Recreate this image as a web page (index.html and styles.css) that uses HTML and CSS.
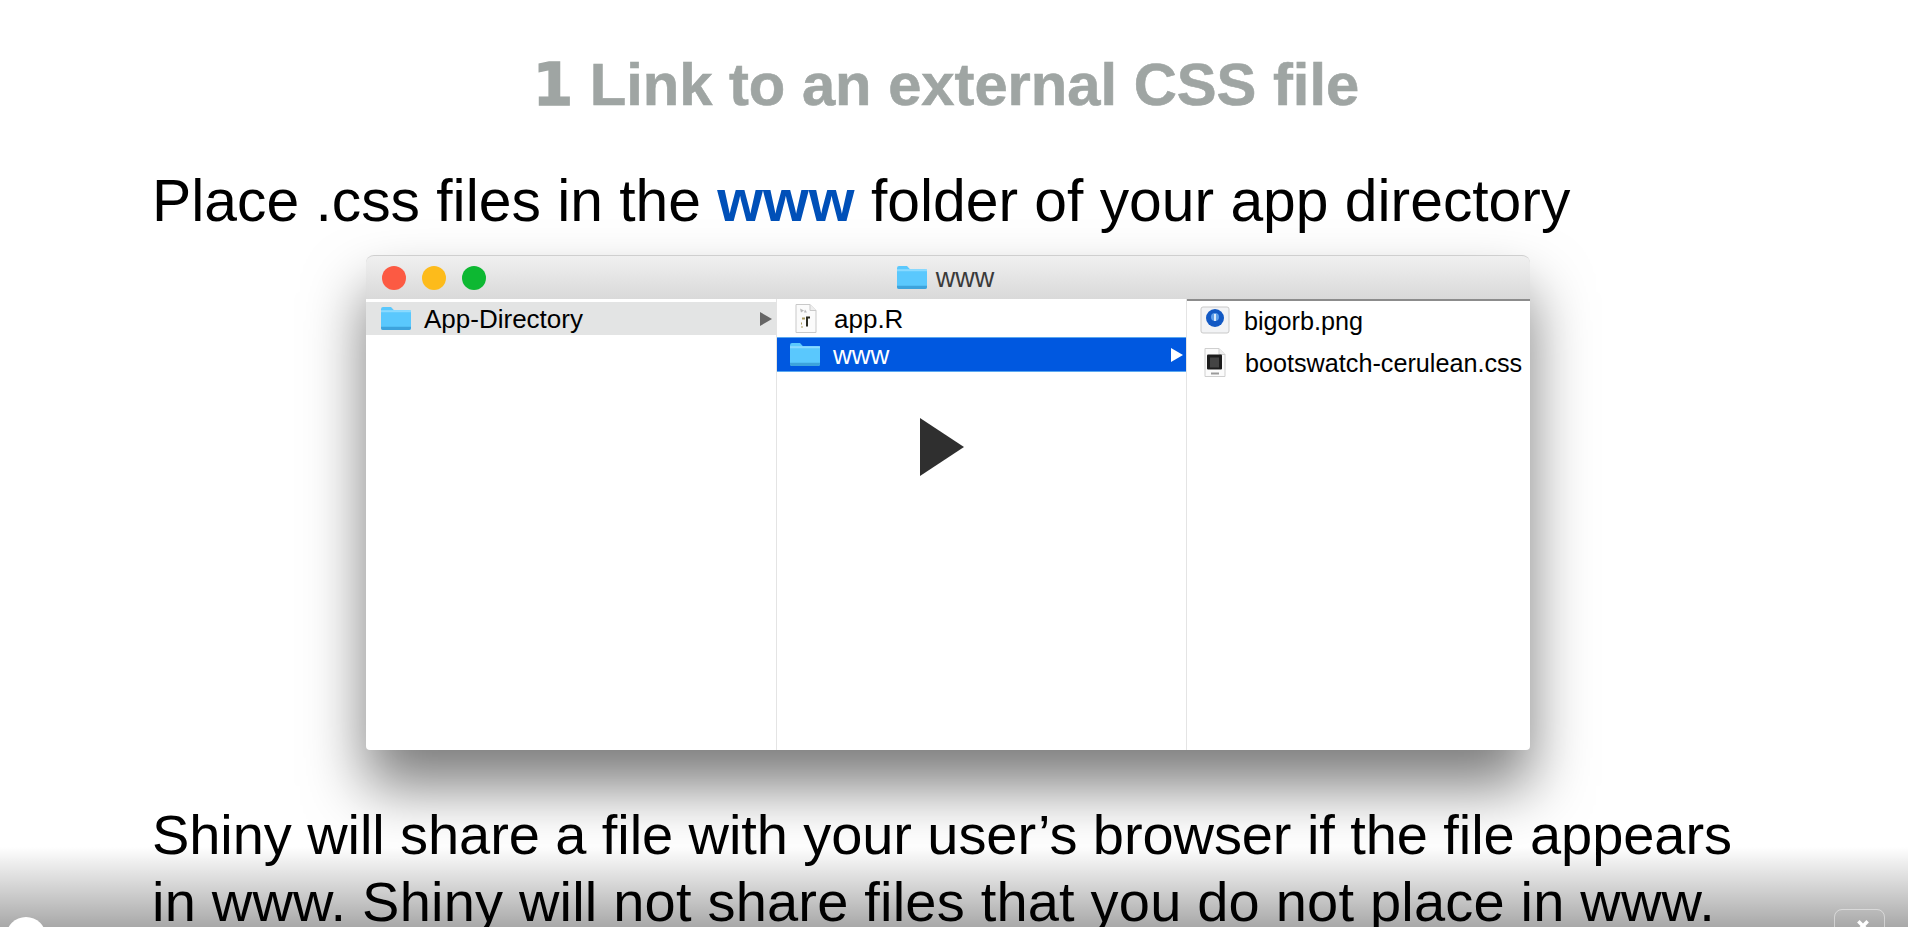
FILE: index.html
```html
<!DOCTYPE html>
<html lang="en">
<head>
  <meta charset="UTF-8">
  <title>Link to an external CSS file</title>
  <link rel="stylesheet" href="styles.css">
</head>
<body>
  <div class="slide">
    <h1 class="title"><span class="num">1</span> Link to an external CSS file</h1>
    <p class="lead">Place .css files in the <b class="hl">www</b> folder of your app directory</p>

    <div class="finder">
      <div class="titlebar">
        <div class="lights">
          <span class="light red"></span>
          <span class="light yellow"></span>
          <span class="light green"></span>
        </div>
        <div class="wintitle">
          <svg class="folder" viewBox="0 0 32 24" preserveAspectRatio="none"><use href="#folder"></use></svg>
          <span class="name">www</span>
        </div>
      </div>
      <div class="cols">
        <div class="col col1">
          <div class="row row-grey">
            <svg class="folder" viewBox="0 0 32 24" preserveAspectRatio="none"><use href="#folder"></use></svg>
            <span class="name">App-Directory</span>
            <span class="arrow"></span>
          </div>
        </div>
        <div class="col col2">
          <div class="row row-file">
            <svg class="fileicon" viewBox="0 0 24 30">
              <path d="M2 1h14l6 6v22H2z" fill="#fbfbfb" stroke="#c9c9c9"/>
              <path d="M16 1v6h6" fill="#eee" stroke="#c9c9c9"/>
              <path d="M6 5l4 2-3 2zM11 6l2 3-3 0z" fill="#b9b9b9"/>
              <path d="M12 13h4v2h-2v8h-2z" fill="#2b2b20"/>
              <path d="M8 14h3v2H8zM7 23h2v1H7zM7 19h1v2H7z" fill="#a89a60"/>
            </svg>
            <span class="name">app.R</span>
          </div>
          <div class="row row-blue">
            <svg class="folder" viewBox="0 0 32 24" preserveAspectRatio="none"><use href="#folder"></use></svg>
            <span class="name">www</span>
            <span class="arrow arrow-white"></span>
          </div>
        </div>
        <div class="col col3">
          <div class="item item-png">
            <svg class="fileicon wide" viewBox="0 0 30 28">
              <rect x="1" y="1" width="28" height="26" rx="2" fill="#f2f3f5" stroke="#c9c9c9"/>
              <circle cx="15" cy="12" r="9" fill="#1259c4"/>
              <circle cx="15" cy="11" r="4" fill="#5f9fe8"/>
              <path d="M14 8h2v7h-2z" fill="#dce9f8"/>
            </svg>
            <span class="name">bigorb.png</span>
          </div>
          <div class="item">
            <svg class="fileicon" viewBox="0 0 24 30">
              <path d="M2 1h14l6 6v22H2z" fill="#fbfbfb" stroke="#cfcfcf"/>
              <path d="M16 1v6h6" fill="#eee" stroke="#cfcfcf"/>
              <rect x="4" y="7" width="15" height="15" rx="1" fill="#1c1c1c"/>
              <rect x="7" y="10" width="9" height="10" fill="#444"/>
              <path d="M8 25h8v2H8z" fill="#9a9a9a"/>
            </svg>
            <span class="name">bootswatch-cerulean.css</span>
          </div>
        </div>
      </div>
    </div>

    <p class="note">
      <span class="line">Shiny will share a file with your user’s browser if the file appears</span>
      <span class="line line2">in www. Shiny will not share files that you do not place in www.</span>
    </p>
  </div>

  <!-- video player bits on top of the slide -->
  <div class="shade"></div>
  <svg class="play" viewBox="0 0 44 58"><path d="M0 0L44 29L0 58z"></path></svg>
  <div class="knob"></div>
  <div class="corner-btn">
    <svg viewBox="0 0 12 12"><path d="M2 2l8 8M10 2l-8 8"></path></svg>
  </div>

  <svg class="defs" aria-hidden="true">
    <symbol id="folder" viewBox="0 0 32 24" preserveAspectRatio="none">
      <path d="M1 3a2 2 0 0 1 2-2h8l3 3h15a2 2 0 0 1 2 2v15a2 2 0 0 1-2 2H3a2 2 0 0 1-2-2z" fill="#5ac8fd"/>
      <path d="M1 21a2 2 0 0 0 2 2h26a2 2 0 0 0 2-2v-1H1z" fill="#3da3dc"/>
      <path d="M1 4h30v2H1z" fill="#8adaff"/>
    </symbol>
  </svg>
</body>
</html>
```

FILE: styles.css
```css
html, body {
  margin: 0;
  height: 100%;
  overflow: hidden;
  background: #fff;
}
body {
  font-family: 'Liberation Sans', Arial, sans-serif;
  color: #000;
  position: relative;
}
.slide {
  height: 927px;
  overflow: hidden;
  padding: 46px 0 0 152px;
  box-sizing: border-box;
}
.title {
  margin: 0 0 0 -168px;
  text-align: center;
  font-size: 59.7px;
  line-height: 78px;
  font-weight: bold;
  color: #9fa5a3;
  -webkit-text-stroke: 0.6px #9fa5a3;
}
.title .num {
  font-size: 58px;
  font-family: 'DejaVu Sans', sans-serif;
  -webkit-text-stroke: 1.5px #9fa5a3;
}
.lead {
  margin: 42px 0 0;
  font-size: 58.8px;
  line-height: 70px;
  white-space: nowrap;
}
.hl {
  color: #0050b8;
}

.finder {
  width: 1164px;
  height: 495px;
  margin: 19px 0 0 214px;
  border-radius: 8px 8px 4px 4px;
  background: #fff;
  box-shadow: 0 36px 60px rgba(0, 0, 0, 0.52);
  display: flex;
  flex-direction: column;
}
.titlebar {
  height: 44px;
  flex: none;
  border-radius: 8px 8px 0 0;
  border-top: 1px solid #cfcfcf;
  box-sizing: border-box;
  background: linear-gradient(#f0f0f0, #d9d9d9);
  position: relative;
  display: flex;
  align-items: center;
  justify-content: center;
}
.lights {
  position: absolute;
  left: 16px;
  top: 10px;
  display: flex;
  gap: 16px;
}
.light {
  width: 24px;
  height: 24px;
  border-radius: 50%;
}
.red { background: #fc5a43; }
.yellow { background: #fdbb1b; }
.green { background: #0db832; }
.wintitle {
  display: flex;
  align-items: center;
  gap: 8px;
  font-size: 27px;
  color: #3a3a3a;
  margin-left: -6px;
}
.cols {
  flex: 1;
  display: flex;
  min-height: 0;
}
.col {
  box-sizing: border-box;
  font-size: 26px;
}
.col1 {
  width: 411px;
  border-right: 1px solid #e4e4e4;
}
.col2 {
  width: 410px;
  border-right: 1px solid #e4e4e4;
}
.col3 {
  flex: 1;
  font-size: 25.2px;
  border-top: 2px solid #8c8c8c;
  padding: 1px 0 0 13px;
}
.row {
  display: flex;
  align-items: center;
  position: relative;
}
.row-grey {
  height: 33px;
  background: #e3e4e4;
  margin-top: 3px;
  padding-left: 14px;
}
.row-file {
  height: 38px;
  padding-left: 17px;
}
.row-blue {
  height: 35px;
  background: #0058e0;
  border-top: 1px solid #5aa8f0;
  border-bottom: 1px solid #5aa8f0;
  box-sizing: border-box;
  color: #fff;
  padding-left: 12px;
}
.folder {
  width: 32px;
  height: 25px;
  flex: none;
}
.name {
  padding-top: 2px;
}
.col1 .name { margin-left: 12px; }
.row-blue .name { margin-left: 12px; }
.row-file .name { margin-left: 16px; }
.arrow {
  position: absolute;
  right: 4px;
  top: 10px;
  width: 0;
  height: 0;
  border-left: 12px solid #666;
  border-top: 7px solid transparent;
  border-bottom: 7px solid transparent;
}
.arrow-white {
  border-left-color: #fff;
  right: 3px;
}
.fileicon {
  width: 24px;
  height: 31px;
  flex: none;
}
.fileicon.wide {
  width: 30px;
  height: 28px;
}
.item {
  height: 36px;
  margin-top: 6px;
  display: flex;
  align-items: center;
  gap: 18px;
  padding-left: 3px;
  white-space: nowrap;
}
.item-png {
  margin-top: 0;
  padding-left: 0;
  gap: 14px;
}

.note {
  margin: 51px 0 0;
  font-size: 56px;
  line-height: 67px;
}
.line {
  display: block;
  white-space: nowrap;
  letter-spacing: -0.08px;
}
.line2 {
  letter-spacing: 0.2px;
}

.shade {
  position: absolute;
  left: 0;
  right: 0;
  bottom: 0;
  height: 80px;
  background: linear-gradient(rgba(0, 0, 0, 0), rgba(0, 0, 0, 0.34));
}
.play {
  position: absolute;
  left: 920px;
  top: 418px;
  width: 44px;
  height: 58px;
  fill: #2f2f2f;
}
.knob {
  position: absolute;
  left: 6px;
  top: 917px;
  width: 40px;
  height: 40px;
  border-radius: 50%;
  background: #fff;
}
.corner-btn {
  position: absolute;
  left: 1834px;
  top: 909px;
  width: 51px;
  height: 50px;
  border: 1px solid rgba(255, 255, 255, 0.45);
  border-radius: 8px;
  box-sizing: border-box;
  text-align: center;
  padding: 9px 0 0 6px;
}
.corner-btn svg {
  width: 14px;
  height: 14px;
  fill: none;
  stroke: #fff;
  stroke-width: 3;
}
.defs {
  position: absolute;
  width: 0;
  height: 0;
}
```
